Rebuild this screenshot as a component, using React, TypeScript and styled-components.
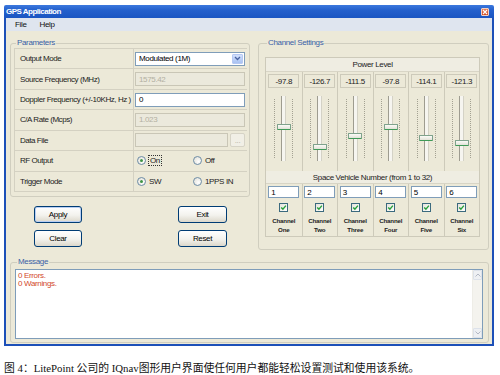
import React from 'react';
import styled, { createGlobalStyle } from 'styled-components';

const Global = createGlobalStyle`
  html, body { margin: 0; padding: 0; background: #ffffff; }
  body { font-family: "Liberation Sans", Arial, sans-serif; }
  * { box-sizing: border-box; }
`;

const UI_FONT = `font-family: "Liberation Sans", Arial, sans-serif; font-size: 8px; letter-spacing: -0.35px; white-space: nowrap;`;

const Page = styled.div`
  width: 500px;
  height: 375px;
  padding: 5px 0 0 4px;
  overflow: hidden;
  background: #ffffff;
`;

const Window = styled.div`
  width: 490px;
  display: flex;
  flex-direction: column;
`;

const TitleBar = styled.div`
  height: 13px;
  display: flex;
  align-items: center;
  justify-content: space-between;
  padding: 0 5px 0 2px;
  background: linear-gradient(#3b78de, #2460cc 40%, #1a55c2);
  border-radius: 2px 2px 0 0;
`;

const Title = styled.span`
  font-family: "Liberation Sans", Arial, sans-serif;
  font-weight: bold;
  font-size: 8px;
  letter-spacing: -0.5px;
  color: #ffffff;
`;

const CloseBtn = styled.span`
  width: 8px;
  height: 8px;
  border: 1px solid #f3d2c4;
  border-radius: 1px;
  background: linear-gradient(#e5805c, #cc4a22);
  display: flex;
  align-items: center;
  justify-content: center;
`;

const Frame = styled.div`
  border: 2px solid #1d50b8;
  border-top: none;
  background: #ece9d8;
  display: flex;
  flex-direction: column;
`;

const MenuBar = styled.div`
  height: 13px;
  display: flex;
  align-items: center;
  gap: 13px;
  padding-left: 9px;
  background: #dfe5ef;
  ${UI_FONT}
  color: #111;
`;

const Content = styled.div`
  height: 313px;
  padding: 7px 3px 3px 4px;
  display: flex;
  flex-direction: column;
  gap: 7px;
`;

const TopRow = styled.div`
  display: flex;
  gap: 8px;
  align-items: flex-start;
`;

const LeftCol = styled.div`
  width: 240px;
  display: flex;
  flex-direction: column;
`;

const Group = styled.fieldset<{ $w: number; $pad: string }>`
  margin: 0;
  min-width: 0;
  width: ${(p) => p.$w}px;
  border: 1px solid #d0cebf;
  border-radius: 3px;
  padding: ${(p) => p.$pad};
`;

const Legend = styled.legend`
  ${UI_FONT}
  line-height: 10px;
  height: 10px;
  padding: 0 1px;
  margin-left: 2px;
  color: #3a5fa6;
`;

/* ---------- Parameters ---------- */

const ParamTable = styled.div`
  display: grid;
  grid-template-columns: 118px 1fr;
  grid-auto-rows: 19.43px;
  gap: 1px;
  width: 233px;
  background: #d4d1c2;
  border: 1px solid #d4d1c2;
`;

const Label = styled.div`
  background: #ece9d8;
  display: flex;
  align-items: center;
  padding-left: 5px;
  overflow: hidden;
  ${UI_FONT}
  letter-spacing: -0.45px;
  color: #222;
`;

const Value = styled.div`
  background: #ece9d8;
  display: flex;
  align-items: center;
  padding-left: 1px;
`;

const TextBox = styled.div<{ $disabled?: boolean; $w?: number }>`
  width: ${(p) => p.$w ?? 110}px;
  height: 14px;
  display: flex;
  align-items: center;
  padding: 0 3px;
  ${UI_FONT}
  border: 1px solid ${(p) => (p.$disabled ? '#c9c6b6' : '#7f9db9')};
  background: ${(p) => (p.$disabled ? '#ebe9dc' : '#ffffff')};
  color: ${(p) => (p.$disabled ? '#b3b0a2' : '#000')};
`;

const Select = styled.div`
  width: 110px;
  height: 14px;
  display: flex;
  align-items: stretch;
  border: 1px solid #7f9db9;
  background: #ffffff;
  ${UI_FONT}
  color: #000;
`;

const SelectText = styled.span`
  flex: 1;
  display: flex;
  align-items: center;
  padding-left: 3px;
`;

const SelectArrow = styled.span`
  width: 11px;
  margin: 1px;
  border-radius: 1px;
  border: 1px solid #b6c9f3;
  background: linear-gradient(#d2e0fc, #a9c2f2);
  display: flex;
  align-items: center;
  justify-content: center;
`;

const FileRow = styled.div`
  display: flex;
  gap: 2px;
  align-items: center;
`;

const Browse = styled.div`
  width: 15px;
  height: 14px;
  border: 1px solid #d6d3c6;
  border-radius: 2px;
  background: #f1efe6;
  color: #b5b2a4;
  ${UI_FONT}
  display: flex;
  align-items: center;
  justify-content: center;
`;

const Radios = styled.div`
  display: grid;
  grid-template-columns: 56px 56px;
  padding-left: 2px;
`;

const RadioItem = styled.div`
  display: flex;
  align-items: center;
  gap: 3px;
  ${UI_FONT}
  color: #222;
`;

const RadioDot = styled.span<{ $on?: boolean }>`
  width: 9px;
  height: 9px;
  border-radius: 50%;
  border: 1px solid #6d8ca6;
  background: radial-gradient(circle at 65% 65%, #ffffff, #dedcd3);
  display: inline-flex;
  align-items: center;
  justify-content: center;
  &::after {
    content: '';
    width: 3px;
    height: 3px;
    border-radius: 50%;
    background: ${(p) => (p.$on ? '#3f9446' : 'transparent')};
  }
`;

const Focus = styled.span`
  outline: 1px dotted #333;
  padding: 0 1px;
`;

const ButtonGrid = styled.div`
  display: grid;
  grid-template-columns: 48px 49px;
  column-gap: 96px;
  row-gap: 7px;
  padding-left: 24px;
  margin-top: 9px;
`;

const Btn = styled.button<{ $default?: boolean }>`
  height: 17px;
  padding: 0;
  ${UI_FONT}
  color: #000;
  border: 1px solid #003c74;
  border-radius: 3px;
  background: linear-gradient(#ffffff, #f3f2ed 55%, #dcd8cb);
  box-shadow: ${(p) => (p.$default ? 'inset 0 0 0 1px #b9cff3' : 'none')};
`;

/* ---------- Channels ---------- */

const ChannelTable = styled.div`
  width: 215px;
  border: 1px solid #cdcaba;
  display: flex;
  flex-direction: column;
`;

const HeaderBar = styled.div<{ $h: number }>`
  height: ${(p) => p.$h}px;
  display: flex;
  align-items: center;
  justify-content: center;
  border-bottom: 1px solid #d8d5c6;
  background: #efede2;
  ${UI_FONT}
  color: #222;
`;

const Columns = styled.div`
  display: grid;
  grid-template-columns: repeat(6, 1fr);
`;

const Column = styled.div`
  display: flex;
  flex-direction: column;
  align-items: center;
  border-left: 1px solid #cdcaba;
  &:first-child { border-left: none; }
`;

const PowerBox = styled.div`
  margin-top: 2px;
  width: 31px;
  height: 14px;
  border: 1px solid #cdcaba;
  display: flex;
  align-items: center;
  justify-content: center;
  ${UI_FONT}
  color: #222;
`;

const SliderCell = styled.div`
  position: relative;
  height: 83px;
  padding-top: 8px;
  display: flex;
  gap: 6px;
  align-items: flex-start;
`;

const Ticks = styled.div`
  width: 1px;
  height: 60px;
  margin-top: 3px;
  background: repeating-linear-gradient(to bottom, #a3a192 0 1px, transparent 1px 2px);
`;

const Track = styled.div`
  width: 5px;
  height: 65px;
  border-left: 1px solid #9e9c90;
  border-right: 1px solid #d4d2c6;
  background: #f6f5f0;
`;

const Thumb = styled.div`
  position: absolute;
  left: 50%;
  transform: translateX(-50%);
  width: 14px;
  height: 6px;
  border: 1px solid #7fa28c;
  border-bottom-color: #3f9a57;
  border-radius: 1px;
  background: linear-gradient(#fbfbf7, #e2e2d8);
`;

const SvnBox = styled.div`
  margin-top: 2px;
  width: 31px;
  height: 12px;
  border: 1px solid #7f9db9;
  background: #ffffff;
  display: flex;
  align-items: center;
  padding-left: 2px;
  ${UI_FONT}
  color: #000;
`;

const CheckRow = styled.div`
  height: 18px;
  display: flex;
  align-items: center;
`;

const CheckBox = styled.span`
  width: 9px;
  height: 9px;
  border: 1px solid #3b6a7e;
  background: linear-gradient(135deg, #e4e3dc, #ffffff);
  display: flex;
  align-items: center;
  justify-content: center;
`;

const ChanLabel = styled.div`
  height: 20px;
  font-family: "Liberation Sans", Arial, sans-serif;
  font-weight: bold;
  font-size: 6.2px;
  letter-spacing: -0.2px;
  line-height: 9px;
  text-align: center;
  color: #222;
`;

/* ---------- Message ---------- */

const MsgBox = styled.div`
  height: 70px;
  border: 1px solid #7f9db9;
  background: #ffffff;
  display: flex;
`;

const MsgText = styled.div`
  flex: 1;
  padding: 2px 2px;
  ${UI_FONT}
  line-height: 8px;
  color: #d2492c;
`;

const ScrollBar = styled.div`
  width: 10px;
  display: flex;
  flex-direction: column;
  justify-content: space-between;
  background: #f4f3ee;
  border-left: 1px solid #eeede7;
`;

const ScrollBtn = styled.div`
  height: 10px;
  border: 1px solid #dde2ea;
  border-radius: 1px;
  background: #eef0f3;
  display: flex;
  align-items: center;
  justify-content: center;
`;

const Caption = styled.div`
  margin-top: 13px;
  font-family: "Liberation Serif", "Noto Sans CJK SC", serif;
  font-size: 10.8px;
  color: #111;
  white-space: nowrap;
`;

const channels = [
  { power: -97.8, svn: '1', name: 'One' },
  { power: -126.7, svn: '2', name: 'Two' },
  { power: -111.5, svn: '3', name: 'Three' },
  { power: -97.8, svn: '4', name: 'Four' },
  { power: -114.1, svn: '5', name: 'Five' },
  { power: -121.3, svn: '6', name: 'Six' },
];

const Chevron = ({ color }: { color: string }) => (
  <svg width="7" height="5" viewBox="0 0 7 5">
    <path d="M1 1 L3.5 3.5 L6 1" fill="none" stroke={color} strokeWidth="1.3" />
  </svg>
);

const Tick = () => (
  <svg width="7" height="7" viewBox="0 0 7 7">
    <path d="M1.2 3.4 L2.9 5.1 L5.9 1.6" fill="none" stroke="#27a03a" strokeWidth="1.4" />
  </svg>
);

export default function App() {
  return (
    <Page>
      <Global />
      <Window>
        <TitleBar>
          <Title>GPS Application</Title>
          <CloseBtn>
            <svg width="6" height="6" viewBox="0 0 6 6">
              <path d="M1 1 L5 5 M5 1 L1 5" stroke="#ffffff" strokeWidth="1.1" />
            </svg>
          </CloseBtn>
        </TitleBar>
        <Frame>
          <MenuBar>
            <span>File</span>
            <span>Help</span>
          </MenuBar>
          <Content>
            <TopRow>
              <LeftCol>
                <Group $w={240} $pad="0 2px 4px 3px">
                  <Legend>Parameters</Legend>
                  <ParamTable>
                    <Label>Output Mode</Label>
                    <Value>
                      <Select>
                        <SelectText>Modulated (1M)</SelectText>
                        <SelectArrow>
                          <Chevron color="#4a63a0" />
                        </SelectArrow>
                      </Select>
                    </Value>
                    <Label>Source Frequency (MHz)</Label>
                    <Value>
                      <TextBox $disabled>1575.42</TextBox>
                    </Value>
                    <Label>Doppler Frequency (+/-10KHz, Hz )</Label>
                    <Value>
                      <TextBox>0</TextBox>
                    </Value>
                    <Label>C/A Rate (Mcps)</Label>
                    <Value>
                      <TextBox $disabled>1.023</TextBox>
                    </Value>
                    <Label>Data File</Label>
                    <Value>
                      <FileRow>
                        <TextBox $disabled $w={93} />
                        <Browse>...</Browse>
                      </FileRow>
                    </Value>
                    <Label>RF Output</Label>
                    <Value>
                      <Radios>
                        <RadioItem>
                          <RadioDot $on />
                          <Focus>On</Focus>
                        </RadioItem>
                        <RadioItem>
                          <RadioDot />
                          <span>Off</span>
                        </RadioItem>
                      </Radios>
                    </Value>
                    <Label>Trigger Mode</Label>
                    <Value>
                      <Radios>
                        <RadioItem>
                          <RadioDot $on />
                          <span>SW</span>
                        </RadioItem>
                        <RadioItem>
                          <RadioDot />
                          <span>1PPS IN</span>
                        </RadioItem>
                      </Radios>
                    </Value>
                  </ParamTable>
                </Group>
                <ButtonGrid>
                  <Btn $default>Apply</Btn>
                  <Btn>Exit</Btn>
                  <Btn>Clear</Btn>
                  <Btn>Reset</Btn>
                </ButtonGrid>
              </LeftCol>
              <Group $w={231} $pad="9px 8px 12px 6px">
                <Legend>Channel Settings</Legend>
                <ChannelTable>
                  <HeaderBar $h={14}>Power Level</HeaderBar>
                  <Columns>
                    {channels.map((c, i) => (
                      <Column key={i}>
                        <PowerBox>{c.power.toFixed(1)}</PowerBox>
                        <SliderCell>
                          <Ticks />
                          <Track />
                          <Ticks />
                          <Thumb style={{ top: `${35.5 + (-97.8 - c.power) * 0.709}px` }} />
                        </SliderCell>
                      </Column>
                    ))}
                  </Columns>
                  <HeaderBar $h={13}>Space Vehicle Number (from 1 to 32)</HeaderBar>
                  <Columns>
                    {channels.map((c, i) => (
                      <Column key={i}>
                        <SvnBox>{c.svn}</SvnBox>
                        <CheckRow>
                          <CheckBox>
                            <Tick />
                          </CheckBox>
                        </CheckRow>
                        <ChanLabel>
                          Channel
                          <br />
                          {c.name}
                        </ChanLabel>
                      </Column>
                    ))}
                  </Columns>
                </ChannelTable>
              </Group>
            </TopRow>
            <Group $w={479} $pad="2px 5px 3px 4px">
              <Legend>Message</Legend>
              <MsgBox>
                <MsgText>
                  0 Errors.
                  <br />
                  0 Warnings.
                </MsgText>
                <ScrollBar>
                  <ScrollBtn>
                    <svg width="6" height="4" viewBox="0 0 6 4">
                      <path d="M0.5 3.5 L3 1 L5.5 3.5" fill="none" stroke="#b3b8c4" strokeWidth="1" />
                    </svg>
                  </ScrollBtn>
                  <ScrollBtn>
                    <svg width="6" height="4" viewBox="0 0 6 4">
                      <path d="M0.5 0.5 L3 3 L5.5 0.5" fill="none" stroke="#b3b8c4" strokeWidth="1" />
                    </svg>
                  </ScrollBtn>
                </ScrollBar>
              </MsgBox>
            </Group>
          </Content>
        </Frame>
      </Window>
      <Caption>图 4：LitePoint 公司的 IQnav图形用户界面使任何用户都能轻松设置测试和使用该系统。</Caption>
    </Page>
  );
}
